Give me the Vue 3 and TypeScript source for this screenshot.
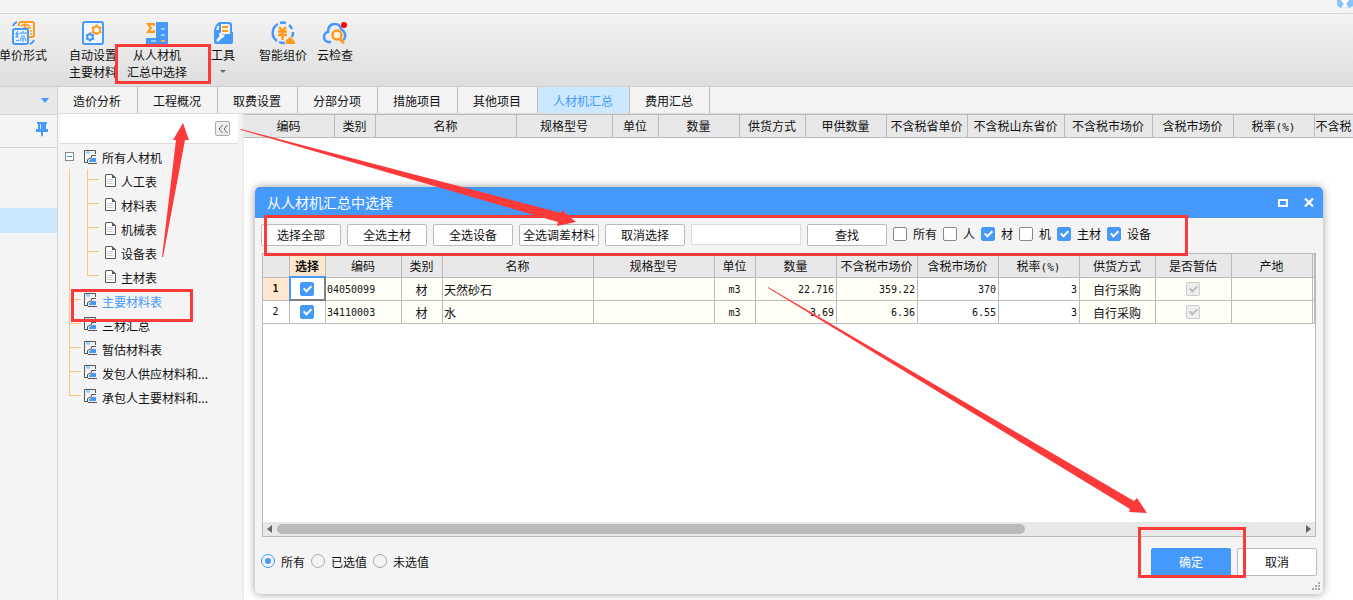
<script setup lang="ts">
import { ref } from 'vue'

interface Column { title: string; width: number; suffix?: string }
interface Filter { label: string; on: boolean }
interface Material {
  checked: boolean; code: string; kind: string; name: string; unit: string
  qty: string; net: string; gross: string; rate: string; supply: string
}

const tabs = ['造价分析', '工程概况', '取费设置', '分部分项', '措施项目', '其他项目', '人材机汇总', '费用汇总']
const activeTab = ref('人材机汇总')

const children = ['人工表', '材料表', '机械表', '设备表', '主材表']
const nodes = ['主要材料表', '三材汇总', '暂估材料表', '发包人供应材料和...', '承包人主要材料和...']
const activeNode = ref('主要材料表')

const sheetColumns: Column[] = [
  { title: '编码', width: 91 }, { title: '类别', width: 41 }, { title: '名称', width: 141 },
  { title: '规格型号', width: 96 }, { title: '单位', width: 46 }, { title: '数量', width: 81 },
  { title: '供货方式', width: 66 }, { title: '甲供数量', width: 81 }, { title: '不含税省单价', width: 81 },
  { title: '不含税山东省价', width: 97 }, { title: '不含税市场价', width: 88 }, { title: '含税市场价', width: 81 },
  { title: '税率', width: 81, suffix: '(%)' }, { title: '不含税', width: 39 },
]

const gridColumns: Column[] = [
  { title: '编码', width: 76 }, { title: '类别', width: 41 }, { title: '名称', width: 151 },
  { title: '规格型号', width: 121 }, { title: '单位', width: 41 }, { title: '数量', width: 81 },
  { title: '不含税市场价', width: 81 }, { title: '含税市场价', width: 81 }, { title: '税率', width: 81, suffix: '(%)' },
  { title: '供货方式', width: 76 }, { title: '是否暂估', width: 76 }, { title: '产地', width: 81 },
]

const rows = ref<Material[]>([
  { checked: true, code: '04050099', kind: '材', name: '天然砂石', unit: 'm3', qty: '22.716', net: '359.22', gross: '370', rate: '3', supply: '自行采购' },
  { checked: true, code: '34110003', kind: '材', name: '水', unit: 'm3', qty: '3.69', net: '6.36', gross: '6.55', rate: '3', supply: '自行采购' },
])

const actions = ['选择全部', '全选主材', '全选设备', '全选调差材料', '取消选择']
const filters = ref<Filter[]>([
  { label: '所有', on: false }, { label: '人', on: false }, { label: '材', on: true },
  { label: '机', on: false }, { label: '主材', on: true }, { label: '设备', on: true },
])
const keyword = ref('')
const scopes = ['所有', '已选值', '未选值']
const scope = ref('所有')
</script>

<template>
  <div class="app">
    <header class="caption">
      <svg class="badge" width="16" height="9" viewBox="0 0 16 9" aria-hidden="true">
        <path d="M0 0H16V6Q13 9 8 9Q3 9 0 6Z" fill="#dceeff" />
        <path d="M0 0H4L7 4L4 8Q0 7 0 3ZM12 0H16V6L12 8L9 4Z" fill="#8cc3fc" />
        <path d="M4 0H12L9 4L11 7H5L7 4Z" fill="#fff" />
      </svg>
    </header>

    <div class="ribbon">
      <button type="button" class="tool">
        <svg width="24" height="24" viewBox="0 0 24 24" fill="none">
          <path d="M8 5V3Q8 1 10 1H21Q23 1 23 3V14Q23 16 21 16H18" stroke="#ff9a1e" stroke-width="2" />
          <path d="M10 5L14 3L19 5M14 4V7M12 7H20M19 10H21M19 13H21" stroke="#ff9a1e" stroke-width="1.5" />
          <rect x="2" y="8" width="15" height="15" rx="2" fill="#edf5fe" stroke="#4599fb" stroke-width="2" />
          <path d="M7 10L5 13H7L5 16H8M5 20L8 19M9 13V12H15V13M10 15H14M9 17H15M12 17V21M10 18L9 20M14 18L15 20M12 10V12" stroke="#4599fb" stroke-width="1.2" />
          <path d="M2 5Q3 2 6 1M23 19Q22 22 19 23" stroke="#4599fb" stroke-width="2" />
        </svg>
        <span>单价形式</span>
      </button>
      <button type="button" class="tool">
        <svg width="24" height="24" viewBox="0 0 24 24" fill="none">
          <rect x="2" y="1" width="20" height="22" rx="2" fill="#f3f8ff" stroke="#4599fb" stroke-width="2" />
          <path d="M15.500 3.500V5M15.500 12.500V14M10.800 6.200L12 7M19 11L20.200 11.800M20.200 6.200L19 7M12 11L10.800 11.800" stroke="#ff9a1e" stroke-width="2.200" />
          <circle cx="15.500" cy="9" r="3.500" stroke="#ff9a1e" stroke-width="2" />
          <path d="M9 11.500V13M9 19V20.500M5 13.800L6.200 14.500M11.800 17.500L13 18.200M13 13.800L11.800 14.500M6.200 17.500L5 18.200" stroke="#4599fb" stroke-width="2" />
          <circle cx="9" cy="16" r="2.800" stroke="#4599fb" stroke-width="2" />
        </svg>
        <span>自动设置<br>主要材料</span>
      </button>
      <button type="button" class="tool">
        <svg width="24" height="24" viewBox="0 0 24 24" fill="none">
          <path d="M11 1H22Q23 1 23 2V23H1V17H11Z" fill="#4599fb" />
          <path d="M9 5V3H3L6 7L3 11H9V9" stroke="#ff9a1e" stroke-width="2.200" />
          <path d="M16 8H20M16 14H20M6 20H11" stroke="#b9dbff" stroke-width="1.500" />
          <path d="M16 20H20" stroke="#ffad42" stroke-width="2" />
        </svg>
        <span>从人材机<br>汇总中选择</span>
      </button>
      <button type="button" class="tool">
        <svg width="24" height="24" viewBox="0 0 24 24" fill="none">
          <path d="M8 1H18Q21 1 21 4V11H22V21Q22 23 20 23H5Q3 23 3 21V10Q3 5 8 1Z" fill="#4599fb" />
          <path d="M10 3H17Q19 3 19 5V13H10Z" fill="#fff4df" />
          <path d="M11 6H17M11 10H17" stroke="#ff9a1e" stroke-width="2" />
          <path d="M5 9Q5 6 8 4V9Z" fill="#e3f0ff" />
          <path d="M6 20L10 16" stroke="#fff" stroke-width="2.500" />
          <path d="M8 13L10 11L11 14L14 13L12 17L9 17Z" fill="#fff" />
        </svg>
        <span>工具</span>
        <i class="more"></i>
      </button>
      <button type="button" class="tool">
        <svg width="24" height="24" viewBox="0 0 24 24" fill="none">
          <path d="M6 20A10 10 0 0 1 7 3M9 2A10 10 0 0 1 15 2M18 4A10 10 0 0 1 21 8M22 11A10 10 0 0 1 21 16M8 21A10 10 0 0 0 14 22" stroke="#4599fb" stroke-width="2.500" />
          <path d="M8 6L11.500 10L15 6M7 10.500H16M7 14H16M11.500 10V19" stroke="#ff9a1e" stroke-width="2.500" />
          <path d="M15 23Q14 18 17 18Q18 15 21 17Q22 18 22 19Q25 20 24 23Z" fill="#ff9a1e" />
        </svg>
        <span>智能组价</span>
      </button>
      <button type="button" class="tool">
        <svg width="26" height="24" viewBox="0 0 26 24" fill="none">
          <path d="M9 21H6Q2 20 2 16Q2 12 6 11Q6 3 13 3Q18 3 19 8Q24 11 23 16Q23 18 21 19" stroke="#4599fb" stroke-width="2.500" />
          <circle cx="15" cy="14" r="4.500" fill="#fff3df" stroke="#ff9a1e" stroke-width="2.500" />
          <path d="M18 18L22 22" stroke="#ff9a1e" stroke-width="3" />
          <circle cx="22" cy="4" r="3" fill="#f00" />
        </svg>
        <span>云检查</span>
      </button>
    </div>

    <div class="body">
      <aside class="side">
        <div class="side-head"><i class="caret"></i></div>
        <div class="side-pin">
          <svg width="12" height="15" viewBox="0 0 12 15" aria-hidden="true">
            <path d="M1 0H11V2H10V7H12V10H7V13L6 15L5 13V10H0V7H2V2H1Z" fill="#4599fb" />
            <path d="M4.500 2V7" stroke="#d8eaff" />
          </svg>
        </div>
        <div class="side-current"></div>
      </aside>

      <main class="work">
        <nav class="tabs">
          <button v-for="t in tabs" :key="t" type="button" class="tab" :class="{ active: t === activeTab }" @click="activeTab = t">{{ t }}</button>
        </nav>
        <div class="panes">
          <section class="tree-pane">
            <div class="tree-bar">
              <button type="button" class="fold" aria-label="收起">
                <svg width="10" height="8" viewBox="0 0 10 8" fill="none" stroke="#666"><path d="M4.500 0L1 4L4.500 8M9.500 0L6 4L9.500 8" /></svg>
              </button>
            </div>
            <div class="tree">
              <div class="node root">
                <i class="minus"></i>
                <svg class="glyph" width="13" height="14" viewBox="0 0 13 14" fill="none">
                  <path d="M11.500 4V.5H.5V12.500H4M3.500 13V9.500L7.500 7.500V5.500H12" stroke="#555" />
                  <path d="M2 2.500H6" stroke="#8dc2ff" stroke-width="2" /><path d="M5 12V10.500L8 8H12V12Z" fill="#4599fb" />
                  <path d="M4 13.500H13" stroke="#555" />
                </svg>
                <span>所有人材机</span>
              </div>
              <ul class="trunk">
                <li class="nested">
                  <ul class="leaves">
                    <li v-for="c in children" :key="c" class="node leaf">
                      <svg class="glyph" width="11" height="13" viewBox="0 0 11 13" fill="none">
                        <path d="M1 .5H7L10.500 4V12.500H.5V1Z" fill="#fff" stroke="#555" /><path d="M7 0V4H11Z" fill="#555" />
                        <path d="M2 5.500H8M2 7.500H8M2 9.500H8" stroke="#ccc" />
                      </svg>
                      <span>{{ c }}</span>
                    </li>
                  </ul>
                </li>
                <li v-for="n in nodes" :key="n" class="node branch" :class="{ active: n === activeNode }" @click="activeNode = n">
                  <svg class="glyph" width="13" height="14" viewBox="0 0 13 14" fill="none">
                    <path d="M11.500 4V.5H.5V12.500H4M3.500 13V9.500L7.500 7.500V5.500H12" stroke="#555" />
                    <path d="M2 2.500H6" stroke="#8dc2ff" stroke-width="2" /><path d="M5 12V10.500L8 8H12V12Z" fill="#4599fb" />
                    <path d="M4 13.500H13" stroke="#555" />
                  </svg>
                  <span>{{ n }}</span>
                </li>
              </ul>
            </div>
          </section>

          <section class="sheet">
            <table class="sheet-table">
              <colgroup><col v-for="c in sheetColumns" :key="c.title" :style="{ width: c.width + 'px' }"></colgroup>
              <thead>
                <tr><th v-for="c in sheetColumns" :key="c.title">{{ c.title }}<span v-if="c.suffix" class="num">{{ c.suffix }}</span></th></tr>
              </thead>
            </table>
          </section>
        </div>
      </main>
    </div>

    <section class="dialog" role="dialog" aria-labelledby="dialog-title">
      <header class="dialog-head">
        <h1 id="dialog-title">从人材机汇总中选择</h1>
        <button type="button" aria-label="最大化">
          <svg width="10" height="8" viewBox="0 0 10 8" fill="none" stroke="#fff" stroke-width="2"><path d="M1 1H9V7H1Z" /></svg>
        </button>
        <button type="button" aria-label="关闭">
          <svg width="10" height="9" viewBox="0 0 10 9" fill="none" stroke="#fff" stroke-width="2.200"><path d="M1 .5L9 8.500M9 .5L1 8.500" /></svg>
        </button>
      </header>

      <div class="toolbar">
        <button v-for="a in actions" :key="a" type="button" class="btn">{{ a }}</button>
        <input v-model="keyword" class="search" type="text" aria-label="查找内容">
        <button type="button" class="btn">查找</button>
        <label v-for="f in filters" :key="f.label" class="option"><input v-model="f.on" class="check" type="checkbox"><span>{{ f.label }}</span></label>
      </div>

      <div class="grid">
        <div class="grid-view">
          <table class="grid-table">
            <colgroup>
              <col class="col-index"><col class="col-pick">
              <col v-for="c in gridColumns" :key="c.title" :style="{ width: c.width + 'px' }">
              <col>
            </colgroup>
            <thead>
              <tr>
                <th></th>
                <th class="pick-head">选择</th>
                <th v-for="c in gridColumns" :key="c.title">{{ c.title }}<span v-if="c.suffix" class="num">{{ c.suffix }}</span></th>
                <th></th>
              </tr>
            </thead>
            <tbody>
              <tr v-for="(r, i) in rows" :key="r.code">
                <th scope="row" class="index num" :class="{ current: i === 0 }">{{ i + 1 }}</th>
                <td class="edit center" :class="{ focus: i === 0 }"><input v-model="r.checked" class="check" type="checkbox" :aria-label="'选择 ' + r.name"></td>
                <td class="num">{{ r.code }}</td>
                <td class="center">{{ r.kind }}</td>
                <td>{{ r.name }}</td>
                <td></td>
                <td class="num center">{{ r.unit }}</td>
                <td class="num right">{{ r.qty }}</td>
                <td class="num right">{{ r.net }}</td>
                <td class="num right edit">{{ r.gross }}</td>
                <td class="num right edit">{{ r.rate }}</td>
                <td class="center">{{ r.supply }}</td>
                <td class="center"><input class="check" type="checkbox" checked disabled :aria-label="'暂估 ' + r.name"></td>
                <td></td>
                <td></td>
              </tr>
            </tbody>
          </table>
        </div>
        <div class="scroll">
          <i class="arrow-left"></i>
          <div class="track"><div class="thumb"></div></div>
          <i class="arrow-right"></i>
        </div>
      </div>

      <footer class="dialog-foot">
        <div class="scopes">
          <label v-for="s in scopes" :key="s" class="option"><input v-model="scope" class="radio" type="radio" name="scope" :value="s"><span>{{ s }}</span></label>
        </div>
        <button type="button" class="btn large primary">确定</button>
        <button type="button" class="btn large">取消</button>
      </footer>
      <svg class="grip" width="9" height="9" viewBox="0 0 9 9" fill="#aaa" aria-hidden="true">
        <path d="M6 0H8V2H6ZM3 3H5V5H3ZM6 3H8V5H6ZM0 6H2V8H0ZM3 6H5V8H3ZM6 6H8V8H6Z" />
      </svg>
    </section>

    <svg class="marks" aria-hidden="true">
      <g fill="none" stroke="#fc3a3a" stroke-width="3">
        <rect x="116.500" y="45.500" width="93" height="37" />
        <rect x="72.500" y="290.500" width="119" height="30" />
        <rect x="265.500" y="216.500" width="921" height="38" />
        <rect x="1139.500" y="528.500" width="105" height="48" />
      </g>
      <g fill="#fc3a3a">
        <path d="M162 257L176 140L173 140L183 123L189 140L185 140L163 257Z" />
        <path d="M241 129L561 213L562 210L576 222L557 226L558 222L241 130Z" />
        <path d="M768 287L1134 501L1137 498L1147 513L1129 512L1130 509L768 288Z" />
      </g>
    </svg>
  </div>
</template>

<style>
body { margin: 0; }
</style>

<style scoped>
.app {
  position: relative;
  display: flex;
  flex-direction: column;
  height: 100vh;
  min-height: 500px;
  overflow: hidden;
  background: #fff;
  color: #111;
  font: 12px/17px "Noto Sans CJK SC", sans-serif;
}
.app *, .app *::before, .app *::after { box-sizing: border-box; }
button, input { font: inherit; color: inherit; margin: 0; }
button { padding: 0; white-space: nowrap; cursor: pointer; }
ul { list-style: none; margin: 0; padding: 0; }
svg { display: block; flex: none; }
.num { font-family: "DejaVu Sans Mono", monospace; font-size: 10px; }

.caption { display: flex; flex: none; justify-content: flex-end; height: 14px; background: #f4f4f4; border-bottom: 1px solid #d4d4d4; }
.ribbon {
  display: grid;
  flex: none;
  grid-template-columns: 70px 70px 58px 74px 46px 58px;
  height: 73px;
  margin-left: -12px;
  background: linear-gradient(#f3f3f3, #dedede);
  border-bottom: 1px solid #cfcfcf;
}
.tool { display: flex; flex-direction: column; align-items: center; padding-top: 7px; border: 0; background: none; }
.tool span { margin-top: 1px; }
.more { margin-top: 7px; border: 3px solid transparent; border-top-color: #666; border-bottom: 0; }

.body { display: flex; flex: 1; min-height: 0; }
.side { flex: none; width: 58px; background: #f4f4f4; border-right: 1px solid #d4d4d4; }
.side-head { display: flex; align-items: center; justify-content: flex-end; height: 28px; padding-right: 8px; background: #e8e8e8; border-bottom: 1px solid #d4d4d4; }
.caret { border: 4px solid transparent; border-top: 5px solid #4599fb; border-bottom: 0; }
.side-pin { display: flex; justify-content: flex-end; height: 33px; padding: 7px 9px 0 0; border-bottom: 1px solid #d4d4d4; }
.side-current { height: 25px; margin-top: 60px; background: #cce8ff; }

.work { display: flex; flex: 1; flex-direction: column; min-width: 0; }
.tabs { display: flex; flex: none; height: 27px; background: #f4f4f4; border-bottom: 1px solid #dcdcdc; }
.tab { padding: 0 16px 0 15px; border: 0; border-right: 1px solid #bbb; background: none; }
.tab.active { background: #cce8ff; color: #4599fb; }
.panes { display: flex; flex: 1; min-height: 0; }
.tree-pane { flex: none; width: 186px; padding: 0 4px 0 2px; background: #f4f4f4; border-right: 2px solid #ececec; }
.tree-bar { display: flex; align-items: center; justify-content: flex-end; height: 30px; padding-right: 8px; background: #fff; border-bottom: 1px solid #dcdcdc; }
.fold { display: grid; place-items: center; width: 15px; height: 15px; background: #eee; border: 1px solid #aaa; border-radius: 2px; }
.tree { padding: 2px 0 0 5px; white-space: nowrap; }
.node { position: relative; display: flex; align-items: center; height: 24px; }
.glyph { margin: 0 5px 2px 0; }
.root { height: 23px; }
.minus { display: grid; place-items: center; width: 9px; height: 9px; margin: 0 10px 2px 0; background: #fff; border: 1px solid #888; }
.minus::after { content: ""; width: 5px; height: 1px; background: #19a0d8; }
.trunk { position: relative; margin-left: 4px; }
.leaves { position: relative; margin-left: 18px; }
.trunk::before, .leaves::before { content: ""; position: absolute; left: 0; top: 0; bottom: 13px; width: 1px; background: #ffc477; }
.leaf { padding-left: 18px; }
.branch { padding-left: 15px; }
.leaf::before, .branch::before { content: ""; position: absolute; left: 0; top: 10px; width: 12px; height: 1px; background: #ffc477; }
.node.active { color: #4599fb; }

.sheet { flex: 1; min-width: 0; overflow: hidden; }
table { table-layout: fixed; border-collapse: separate; border-spacing: 0; }
th, td { overflow: hidden; padding: 0 1px; font-weight: normal; white-space: nowrap; border: 0 solid #bbb; border-width: 0 1px 1px 0; }
th { padding: 0 1px 1px 0; background: #e8e8e8; }
th .num { font-size: 11px; line-height: 1; }
.sheet-table { width: 1110px; }
.sheet-table th { height: 24px; border-top-width: 1px; }

.dialog {
  position: absolute;
  top: 187px;
  right: 30px;
  bottom: 6px;
  left: 255px;
  display: flex;
  flex-direction: column;
  background: #f4f4f4;
  border-radius: 5px;
  box-shadow: 0 0 8px rgba(0, 0, 0, .4);
}
.dialog-head { display: flex; flex: none; align-items: center; gap: 16px; height: 31px; padding: 0 9px 0 12px; color: #fff; background: #4599fb; border-radius: 5px 5px 0 0; }
.dialog-head h1 { flex: 1; margin: 0; font-size: 14px; font-weight: normal; }
.dialog-head button { border: 0; background: none; }
.toolbar { display: flex; flex: none; align-items: center; gap: 6px; height: 35px; padding: 0 6px 2px; }
.btn { flex: none; width: 80px; height: 22px; line-height: 20px; background: #fff; border: 1px solid #bbb; border-radius: 2px; }
.btn.large { height: 28px; line-height: 26px; }
.btn.primary { color: #fff; background: #4599fb; border-color: #4599fb; }
.search { flex: none; width: 110px; height: 21px; padding: 0 4px; background: #fff; border: 1px solid #ddd; }
.option { display: flex; align-items: center; gap: 6px; padding-bottom: 2px; white-space: nowrap; }
.check { display: inline-grid; flex: none; place-items: center; width: 14px; height: 14px; appearance: none; vertical-align: middle; background: #fff; border: 1px solid #888; border-radius: 2px; }
.check:checked { background: #4599fb; border-color: #4599fb; }
.check:checked::after { content: ""; width: 5px; height: 8px; margin-top: -2px; border: solid #fff; border-width: 0 2px 2px 0; transform: rotate(45deg); }
.check:disabled { background: #eee; border-color: #ccc; }
.check:disabled::after { border-color: #bbb; }

.grid { display: flex; flex: 1; flex-direction: column; min-height: 100px; margin: 0 7px; background: #fff; border: 1px solid #bbb; }
.grid-view { flex: 1; overflow: hidden; }
.grid-table { width: 100%; }
.col-index { width: 27px; }
.col-pick { width: 36px; }
.grid-table tr { height: 23px; }
.grid-table thead tr { height: 24px; }
.grid-table td { background: #fffff8; }
.grid-table td .check { display: grid; margin: 0 auto 1px; }
.grid-table td.edit, .grid-table .index { background: #fff; }
.grid-table .pick-head { background: #ffe6cc; font-weight: bold; }
.grid-table .index.current { background: #ffe6cc; font-weight: bold; }
.grid-table td.focus { position: relative; overflow: visible; }
.focus::after { content: ""; position: absolute; inset: -2px -1px -1px -1px; border: 2px solid #4599fb; border-right-color: #808080; border-bottom-color: #808080; pointer-events: none; }
td.center { padding-right: 2px; text-align: center; }
td.right { padding-right: 2px; text-align: right; }
.scroll { display: flex; flex: none; align-items: center; gap: 5px; height: 14px; padding: 0 4px; background: #e8e8e8; }
.arrow-left, .arrow-right { border: 4px solid transparent; }
.arrow-left { border-left: 0; border-right: 5px solid #666; }
.arrow-right { border-right: 0; border-left: 5px solid #666; }
.track { flex: 1; }
.thumb { width: 73%; height: 10px; background: #bbb; border-radius: 5px; }

.dialog-foot { display: flex; flex: none; gap: 6px; height: 57px; padding: 11px 6px 0; }
.scopes { display: flex; flex: 1; gap: 6px; height: 28px; }
.radio { display: grid; flex: none; place-items: center; width: 14px; height: 14px; appearance: none; border: 1px solid #aaa; border-radius: 50%; }
.radio:checked { border-color: #4599fb; }
.radio:checked::after { content: ""; width: 6px; height: 6px; background: #4599fb; border-radius: 50%; }
.grip { position: absolute; right: 2px; bottom: 3px; }
.marks { position: absolute; inset: 0; width: 100%; height: 100%; pointer-events: none; }
</style>
